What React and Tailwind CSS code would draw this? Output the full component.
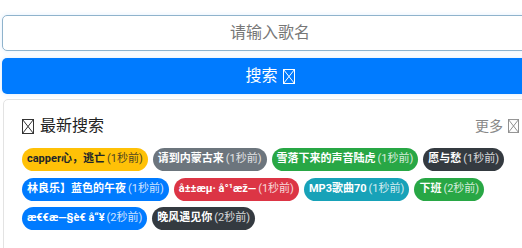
import React from "react";

const Tofu = ({ className = "" }) => (
  <svg viewBox="0 0 12 15" className={className} fill="none" stroke="currentColor" strokeWidth="1">
    <rect x="0.5" y="0.5" width="11" height="14" />
    <path d="M0.5 0.5 L11.5 14.5 M11.5 0.5 L0.5 14.5" />
  </svg>
);

const badges = [
  [
    { n: "capper心，逃亡", t: "(1秒前)", c: "bg-[#ffc107] text-[#212529]" },
    { n: "请到内蒙古来", t: "(1秒前)", c: "bg-[#6c757d] text-white" },
    { n: "雪落下来的声音陆虎", t: "(1秒前)", c: "bg-[#28a745] text-white" },
    { n: "愿与愁", t: "(1秒前)", c: "bg-[#343a40] text-white" },
  ],
  [
    { n: "林良乐】蓝色的午夜", t: "(1秒前)", c: "bg-[#007bff] text-white" },
    { n: "å±±æµ· å°¹æž—", t: "(1秒前)", c: "bg-[#dc3545] text-white" },
    { n: "MP3歌曲70", t: "(1秒前)", c: "bg-[#17a2b8] text-white" },
    { n: "下班", t: "(2秒前)", c: "bg-[#28a745] text-white" },
  ],
  [
    { n: "æ€€æ—§è€ å“¥", t: "(2秒前)", c: "bg-[#007bff] text-white" },
    { n: "晚风遇见你", t: "(2秒前)", c: "bg-[#343a40] text-white" },
  ],
];

export default function App() {
  return (
    <div
      className="w-[522px] h-[248px] overflow-hidden bg-white"
      style={{ fontFamily: 'Roboto, "Noto Sans CJK SC", sans-serif' }}
    >
      <div className="w-[536px] ml-[2px] pt-[15px] flex flex-col">
        <div className="h-[36px] border border-[#8fb3cc] rounded-[5px] flex items-center justify-center text-[16px] text-[#777] shadow-[0_0_5px_rgba(0,123,255,0.12)]">
          请输入歌名
        </div>
        <div className="mt-[7px] h-[36px] bg-[#007bff] rounded-[5px] flex items-center justify-center gap-[5px] text-[16px] text-white shadow-[0_0_5px_rgba(0,123,255,0.15)]">
          <span>搜索</span>
          <Tofu className="w-[12px] h-[15px]" />
        </div>
        <div className="mt-[5px] ml-[1px] border border-[#e3e3e3] rounded-[5px] px-[18px] pt-[14px] pb-[30px]">
          <div className="flex items-center justify-between h-[24px]">
            <div className="flex items-center gap-[6px] text-[16px] text-[#222]">
              <Tofu className="w-[12px] h-[15px] text-[#333]" />
              <span>最新搜索</span>
            </div>
            <div className="flex items-center gap-[5px] text-[14px] text-[#888]">
              <span>更多</span>
              <Tofu className="w-[11px] h-[14px]" />
            </div>
          </div>
          <div className="mt-[10px] flex flex-col gap-[6.5px]">
            {badges.map((row, i) => (
              <div key={i} className="flex gap-[5px]">
                {row.map((b, j) => (
                  <span
                    key={j}
                    className={`h-[23px] px-[5px] rounded-full flex items-center gap-[2px] text-[11px] whitespace-nowrap ${b.c}`}
                  >
                    <span className="font-bold">{b.n}</span>
                    <span className="opacity-80">{b.t}</span>
                  </span>
                ))}
              </div>
            ))}
          </div>
        </div>
      </div>
    </div>
  );
}
